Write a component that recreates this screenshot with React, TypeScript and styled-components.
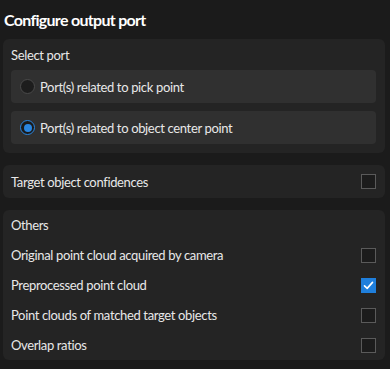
import React, {useState} from 'react';
import styled, {createGlobalStyle} from "styled-components";

const GlobalStyle = createGlobalStyle`
  html, body {
    margin: 0;
    padding: 0;
    background: #1b1b1b;
  }
  body {
    font-family: Lato, "Open Sans", sans-serif;
    color: #e8e8e8;
    letter-spacing: -0.35px;
  }
`

const Page = styled.div`
  width: 390px;
  height: 369px;
  padding: 0 5px 0 3px;
  box-sizing: border-box;
  display: flex;
  flex-direction: column;
  gap: 12px;
  overflow: hidden;
`

const Title = styled.h1`
  margin: 0 0 -12px;
  height: 39px;
  padding-left: 1px;
  display: flex;
  align-items: center;
  font-size: 16px;
  font-weight: 700;
  letter-spacing: -0.7px;
  color: #ffffff;
`

const Panel = styled.section`
  background: #242424;
  border-radius: 6px;
  padding: 0 9px 0 8px;
  display: flex;
  flex-direction: column;
`

const RadioPanel = styled(Panel)`
  padding-bottom: 9px;
  gap: 8px;
`

const SectionLabel = styled.div`
  height: 31px;
  margin-bottom: -8px;
  display: flex;
  align-items: center;
  font-size: 13px;
`

const RadioCard = styled.label`
  height: 33px;
  background: #303030;
  border-radius: 4px;
  display: flex;
  align-items: center;
  gap: 5px;
  padding-left: 9px;
  font-size: 13px;
  cursor: pointer;
`

const RadioDot = styled.span<{checked: boolean}>`
  width: 15px;
  height: 15px;
  box-sizing: border-box;
  border-radius: 50%;
  border: 1.5px solid ${props => props.checked ? "#2a86e0" : "#4a4a4a"};
  background: ${props => props.checked ? "#1a1a1a" : "#1d1d1d"};
  display: flex;
  align-items: center;
  justify-content: center;
  &:after {
    content: "";
    width: 8px;
    height: 8px;
    border-radius: 50%;
    background: #2a86e0;
    display: ${props => props.checked ? "block" : "none"};
  }
`

const CheckRow = styled.label<{height: number}>`
  height: ${props => props.height}px;
  display: flex;
  align-items: center;
  justify-content: space-between;
  font-size: 13px;
  cursor: pointer;
`

const Box = styled.span<{checked: boolean}>`
  width: 15px;
  height: 15px;
  box-sizing: border-box;
  border: 1.5px solid ${props => props.checked ? "#1f7fdc" : "#5a5a5a"};
  background: ${props => props.checked ? "#1f7fdc" : "#1c1c1c"};
  display: flex;
  align-items: center;
  justify-content: center;
`

const Check = ({checked}: {checked: boolean}) => (
    <Box checked={checked}>
        {checked && (
            <svg width="11" height="11" viewBox="0 0 11 11">
                <path d="M1.5 5.8 L4.2 8.4 L9.5 2.4" fill="none" stroke="#fff" strokeWidth="1.6" strokeLinecap="round" strokeLinejoin="round"/>
            </svg>
        )}
    </Box>
)

const others = [
    {label: "Original point cloud acquired by camera", checked: false},
    {label: "Preprocessed point cloud", checked: true},
    {label: "Point clouds of matched target objects", checked: false},
    {label: "Overlap ratios", checked: false},
]

export default function App() {
    const [port, setPort] = useState(1)

    return (
        <Page>
            <GlobalStyle/>
            <Title>Configure output port</Title>

            <RadioPanel>
                <SectionLabel>Select port</SectionLabel>
                {["Port(s) related to pick point", "Port(s) related to object center point"].map((text, i) => (
                    <RadioCard key={text} onClick={() => setPort(i)}>
                        <RadioDot checked={port === i}/>
                        {text}
                    </RadioCard>
                ))}
            </RadioPanel>

            <Panel>
                <CheckRow height={33}>
                    Target object confidences
                    <Check checked={false}/>
                </CheckRow>
            </Panel>

            <Panel>
                <CheckRow height={30}>Others</CheckRow>
                {others.map(item => (
                    <CheckRow key={item.label} height={30}>
                        {item.label}
                        <Check checked={item.checked}/>
                    </CheckRow>
                ))}
            </Panel>
        </Page>
    );
}
